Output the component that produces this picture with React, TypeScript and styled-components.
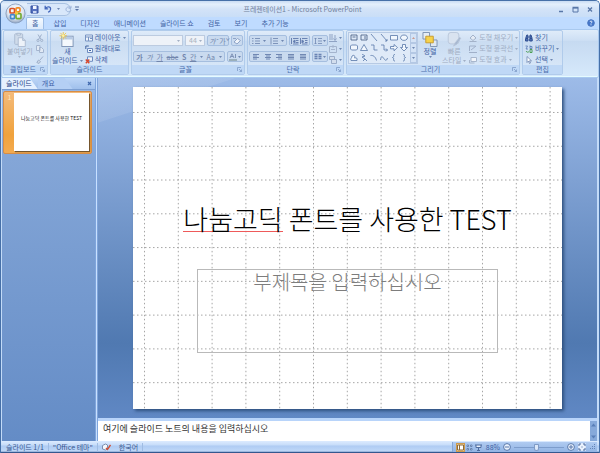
import React from 'react';
import styled, { createGlobalStyle, css } from 'styled-components';

const GlobalStyle = createGlobalStyle`
  *, *::before, *::after { box-sizing: border-box; }
  html, body { margin: 0; padding: 0; }
  body, button, input, select, textarea {
    font-family: "Noto Sans CJK KR", "Noto Sans", sans-serif;
    font-size: 7px;
    line-height: 9px;
    color: #3f62a4;
  }
  button { border: 0; margin: 0; padding: 0; background: none; white-space: nowrap; }
  svg { display: block; flex: none; }
`;

const Window = styled.div`
  height: 100vh;
  display: flex;
  flex-direction: column;
  overflow: hidden;
  background: #c3dbf8;
  border: solid #4670a8;
  border-width: 1px 1px 0 1px;
  border-radius: 5px 5px 0 0;
`;

/* Title bar and tabs */
const Header = styled.header`
  position: relative;
  flex: none;
`;
const TitleBar = styled.div`
  display: flex;
  align-items: center;
  height: 16px;
  padding: 0 6px 0 26px;
  background: linear-gradient(#c9dcf3, #e4effc 20%, #d3e3f8 50%, #c9def7);
`;
const QuickAccess = styled.div`
  display: flex;
  align-items: center;
  gap: 5px;
  width: 44px;
  height: 13px;
  padding-left: 3px;
  border: 1px solid #a9c2e2;
  border-left: 0;
  border-radius: 0 7px 7px 0;
  background: #d8e7fa;
`;
const MoreButton = styled.button`
  padding-left: 4px;
`;
const WindowTitle = styled.h1`
  flex: 1;
  margin: 0;
  padding-right: 32px;
  text-align: center;
  font-size: 7px;
  font-weight: 400;
  line-height: 12px;
  color: #71819b;
`;
const WindowButtons = styled.div`
  display: flex;
  align-items: center;
  gap: 8px;
`;
const OfficeButton = styled.button`
  position: absolute;
  top: 2px;
  left: 4px;
`;
const TabBar = styled.nav`
  display: flex;
  align-items: flex-end;
  height: 12px;
  padding: 0 4px 0 25px;
  background: #bfdbff;
`;
const RibbonTab = styled.button<{ $active?: boolean }>`
  height: 12px;
  padding: 0 5px;
  margin-right: 4px;
  border-radius: 2px 2px 0 0;
  ${p => p.$active && css`
    border: 1px solid #9dbde6;
    border-bottom: 0;
    background: linear-gradient(#f5faff, #dceafb);
  `}
`;
const HelpButton = styled.button`
  margin-left: auto;
  align-self: center;
`;

/* Ribbon */
const Ribbon = styled.div`
  flex: none;
  display: flex;
  gap: 2px;
  height: 49px;
  padding: 0 2px 2px 1px;
  border: 1px solid #a9c9ef;
  border-radius: 2px;
  background: linear-gradient(#dfecfa, #cddff4 22%, #c6daf1 24%, #d6e9fb);
  box-shadow: inset 0 -1px #e5fbff;
`;
const Group = styled.section<{ $w: number }>`
  flex: none;
  display: flex;
  flex-direction: column;
  width: ${p => p.$w}px;
  border: 1px solid #b0cbeb;
  border-radius: 2px;
  background: linear-gradient(#dfebf9, #d1e1f4 22%, #cadcf1 24%, #dae9fa);
`;
const GroupBody = styled.div<{ $gap?: number; $pad?: number }>`
  flex: 1;
  min-height: 0;
  display: flex;
  gap: ${p => p.$gap ?? 4}px;
  padding: 0 ${p => p.$pad ?? 3}px;
`;
const GroupLabel = styled.h2`
  display: flex;
  align-items: center;
  justify-content: center;
  height: 9px;
  margin: 0;
  padding: 0 2px;
  font-size: 7px;
  font-weight: 400;
  line-height: 9px;
  background: #bfd8f6;
  color: #4a6cab;
  & > span { flex: 1; text-align: center; }
`;
const BigButton = styled.button<{ $disabled?: boolean }>`
  display: flex;
  flex-direction: column;
  align-items: center;
  padding-top: 1px;
  color: ${p => (p.$disabled ? '#9eabc0' : '#3f62a4')};
  & > svg:first-child { height: 15px; }
`;
const CaretLine = styled.span`
  display: flex;
  align-items: center;
  gap: 2px;
`;
const SmallStack = styled.div`
  display: flex;
  flex-direction: column;
  justify-content: space-around;
  padding: 1px 0 0;
`;
const SmallButton = styled.button<{ $disabled?: boolean }>`
  display: flex;
  align-items: center;
  gap: 2px;
  color: ${p => (p.$disabled ? '#a0aec5' : '#4566a6')};
`;
const Rows = styled.div`
  flex: 1;
  min-width: 0;
  display: flex;
  flex-direction: column;
  gap: 5px;
  padding-top: 4px;
`;
const Row = styled.div`
  display: flex;
  gap: 2px;
`;
const FontSelect = styled.select<{ $w: number }>`
  appearance: none;
  width: ${p => p.$w}px;
  height: 11px;
  padding: 0 3px;
  border: 1px solid #bccbe0;
  border-radius: 0;
  background: #eef2f8;
  color: #a9b2c0;
`;
const SelectBox = styled.span`
  display: flex;
  align-items: center;
  & > svg { margin-left: -6px; margin-right: 3px; pointer-events: none; }
`;
const ToolGroup = styled.div<{ $grow?: boolean }>`
  display: flex;
  align-items: center;
  justify-content: space-around;
  flex: ${p => (p.$grow ? 1 : 'none')};
  min-width: 0;
  height: 11px;
  padding: 0 1px;
  gap: 1px;
  border: 1px solid #a5bedf;
  border-radius: 2px;
  background: #c9daef;
`;
const LetterButton = styled.button<{ $kind?: 'bold' | 'italic' | 'under' | 'strike' }>`
  color: #7186ad;
  line-height: 8px;
  font-weight: ${p => (p.$kind === 'bold' ? 700 : 400)};
  font-style: ${p => (p.$kind === 'italic' ? 'italic' : 'normal')};
  text-decoration: ${p =>
    p.$kind === 'under' ? 'underline' : p.$kind === 'strike' ? 'line-through' : 'none'};
`;

/* Workspace */
const Workspace = styled.div`
  flex: 1;
  min-height: 0;
  display: flex;
  padding: 0 2px 0 1px;
`;
const Sidebar = styled.aside`
  flex: none;
  width: 93px;
  display: flex;
  flex-direction: column;
  background: linear-gradient(#9bbbe9, #84a6d7 22%, #648cc6);
`;
const PaneTabs = styled.div`
  flex: none;
  display: flex;
  align-items: center;
  height: 12px;
  background: linear-gradient(#bdd6f7, #a0c0ec);
  border-bottom: 1px solid #7c9fd2;
`;
const PaneTab = styled.button<{ $active?: boolean }>`
  height: 11px;
  padding: 0 ${p => (p.$active ? 6 : 18)}px 0 4px;
  color: ${p => (p.$active ? '#1d3f85' : '#3d62a8')};
  background: ${p => (p.$active ? '#e6f1ff' : '#b4cff4')};
  clip-path: polygon(0 0, calc(100% - 8px) 0, 100% 100%, 0 100%);
`;
const ClosePane = styled.button`
  margin-left: auto;
  padding-right: 3px;
`;
const Thumbnail = styled.button`
  display: flex;
  gap: 1px;
  margin: 1px 3px 0 1px;
  padding: 1px 2px 2px 2px;
  border: 1px solid #d78d46;
  border-radius: 2px;
  background: linear-gradient(#f4bb7b, #f0a23c 70%, #f3ab50);
`;
const ThumbNumber = styled.span`
  width: 7px;
  text-align: center;
  color: #fbe7c4;
`;
const ThumbPage = styled.span`
  flex: 1;
  height: 58px;
  padding-top: 20px;
  font-size: 5px;
  line-height: 9px;
  text-align: center;
  color: #111;
  background: #fff;
  box-shadow: 1px 1px 1px #75552c;
`;
const Splitter = styled.div`
  flex: none;
  width: 3px;
  border: solid #7fa5dc;
  border-width: 0 1px;
  background: #c8e0ff;
`;
const Editor = styled.main`
  flex: 1;
  min-width: 0;
  display: flex;
  flex-direction: column;
`;
const Canvas = styled.div`
  flex: 1;
  min-height: 0;
  display: flex;
  align-items: center;
  justify-content: center;
  padding: 0 35px;
  background:
    linear-gradient(162deg, #ffffff26 0, #ffffff18 42px, transparent 43px),
    linear-gradient(#9dbbe8, #7fa1d3 30%, #5079b1 78%, #6088c4);
`;
const Slide = styled.article`
  position: relative;
  flex: 1;
  aspect-ratio: 4 / 3;
  display: grid;
  grid-template-rows: 182fr 84fr 56fr;
  justify-items: center;
  background: #fff;
  box-shadow: 2px 2px 3px #2f517f;
`;
const GridLines = styled.svg`
  position: absolute;
  inset: 0;
  width: 100%;
  height: 100%;
`;
const SlideTitle = styled.h2`
  position: relative;
  align-self: end;
  margin: 0 0 30px;
  font-size: 27px;
  font-weight: 300;
  line-height: 40px;
  white-space: nowrap;
  color: #000;
`;
const Misspelled = styled.span`
  background: linear-gradient(#ee5a5a, #ee5a5a) 0 32px / 100% 1px no-repeat;
`;
const Subtitle = styled.p`
  position: relative;
  width: 70%;
  margin: 0;
  border: 1px solid #b9b9b9;
  font-size: 20px;
  font-weight: 300;
  line-height: 23px;
  text-align: center;
  color: #7d7d7d;
`;
const NotesPane = styled.div`
  flex: none;
  display: flex;
  height: 23px;
  border-top: 3px solid #b8d4fa;
`;
const Notes = styled.textarea`
  flex: 1;
  min-width: 0;
  resize: none;
  border: 0;
  outline: 0;
  padding: 2px 5px;
  overflow: hidden;
  font-size: 9px;
  line-height: 12px;
  color: #333;
  background: #fff;
`;
const NotesScroll = styled.div`
  display: flex;
  flex-direction: column;
  justify-content: space-between;
  width: 7px;
  padding: 2px 1px;
  background: #86a9da;
`;

/* Status bar */
const StatusBar = styled.footer`
  flex: none;
  display: flex;
  align-items: center;
  height: 12px;
  padding: 0 2px 0 1px;
  background: linear-gradient(#dcebff, #c6dcf9 35%, #aecbf3 40%, #bfd8f8 85%, #34588f 95%);
  color: #38578f;
`;
const StatusItem = styled.span`
  display: flex;
  align-items: center;
  gap: 8px;
  height: 9px;
  padding: 0 4px;
  border-right: 1px solid #9fbce3;
`;
const StatusTools = styled.div`
  display: flex;
  align-items: center;
  gap: 3px;
  height: 10px;
  margin-left: auto;
  padding-left: 3px;
  border-left: 1px solid #85a6d6;
  background: linear-gradient(#b0cbf1, #92b4e4);
`;
const ViewButton = styled.button<{ $active?: boolean }>`
  padding: 1px;
  background: ${p => (p.$active ? '#fbd99b' : 'transparent')};
  box-shadow: ${p => (p.$active ? 'inset 0 0 0 1px #cf9b4d' : 'none')};
`;
const ViewButtons = styled.div`
  display: flex;
`;
const ZoomSlider = styled.input`
  appearance: none;
  width: 50px;
  height: 8px;
  margin: 0;
  background: linear-gradient(#7d9dcc, #7d9dcc) center / 100% 1px no-repeat;
  &::-webkit-slider-thumb {
    appearance: none;
    width: 5px;
    height: 7px;
    border: 1px solid #7f9bc6;
    border-radius: 1px 1px 3px 3px;
    background: #dbe8fa;
  }
`;

type IconProps = { w?: number; h?: number; children: React.ReactNode; stroke?: string; fill?: string };
const Icon = ({ w = 8, h = 8, children, stroke = '#7f97bd', fill = 'none' }: IconProps) => (
  <svg width={w} height={h} viewBox={`0 0 ${w} ${h}`} stroke={stroke} fill={fill} aria-hidden="true">
    {children}
  </svg>
);
const Caret = ({ color = '#7088b2' }: { color?: string }) => (
  <Icon w={3} h={2} stroke="none" fill={color}><path d="M0 0h3L1.500 2z" /></Icon>
);
const Launcher = () => (
  <Icon w={5} h={5} stroke="#7f9cc8"><path d="M.5 4V.5H4M2 2l2.500 2.500M4.500 2.500v2h-2" strokeWidth=".8" /></Icon>
);

const OfficeLogo = () => (
  <svg width="21" height="21" viewBox="0 0 21 21" aria-hidden="true">
    <defs>
      <radialGradient id="orb" cx="50%" cy="35%" r="65%">
        <stop offset="0" stopColor="#ffffff" />
        <stop offset=".65" stopColor="#dde5f0" />
        <stop offset="1" stopColor="#8fa3c0" />
      </radialGradient>
    </defs>
    <circle cx="10.500" cy="10.500" r="9.600" fill="url(#orb)" stroke="#8297b7" strokeWidth=".8" />
    <g fill="none" strokeWidth="1.700">
      <rect x="5" y="5.500" width="4.500" height="4.500" rx="1" stroke="#dc5327" />
      <rect x="11" y="4.800" width="4" height="4" rx="1" stroke="#f08a24" />
      <rect x="5.500" y="11.600" width="4" height="4" rx="1" stroke="#4386cf" />
      <rect x="11" y="10.600" width="5" height="5" rx="1" stroke="#74ac35" />
    </g>
    <path d="M10 8.500h3v3h-3z" fill="#f6c53b" />
  </svg>
);

const SaveIcon = () => (
  <Icon w={9} h={9} stroke="#3550a0" fill="#5570be">
    <path d="M1 1h7v7H1z" /><path d="M3 1h3.500v3H3z" fill="#f3f7ff" stroke="none" /><path d="M3 6h3.500v2H3z" fill="#cbd7f3" stroke="none" />
  </Icon>
);
const UndoIcon = () => (
  <Icon w={8} h={8} stroke="#4468bb"><path d="M1.500 3.500C3.500 1 7 1.500 6.500 4.500 6.300 6 5 7 4 7.200M1.200.8v3h3" strokeWidth="1.300" /></Icon>
);
const RedoIcon = () => (
  <Icon w={7} h={8} stroke="#9cb3d8"><path d="M5.500 2.500C2.500 1 .8 3 1 4.800 1.500 7 4.500 7.500 6 5.500M6 .8v2.400H3.500" /></Icon>
);
const PasteIcon = () => (
  <Icon w={14} h={17} stroke="#a9b8cf" fill="#cfdbea">
    <rect x="1" y="2" width="9" height="12" rx="1" /><path d="M3.500 3.500v-2h4v2z" fill="#e3eaf4" />
    <path d="M5 6.500h5l3 3v7H5z" fill="#edf2f9" /><path d="M10 6.500v3h3" />
  </Icon>
);
const CutIcon = () => (
  <Icon stroke="#9fb0ca"><path d="M2 .5l3 5M5.500.5l-3 5" /><circle cx="2" cy="6.400" r="1.100" /><circle cx="5.700" cy="6.400" r="1.100" /></Icon>
);
const CopyIcon = () => (
  <Icon stroke="#a4b5cf" fill="#e0e9f4"><path d="M.5.5H4v5H.5zM3.500 2.500h2l2 2v3h-4z" /></Icon>
);
const BrushIcon = () => (
  <Icon stroke="#9fb0ca"><path d="M7 .5L4 4M2.500 4l2 1.500L3 7.500.8 6.500z" fill="#cbd7e7" /></Icon>
);
const NewSlideIcon = () => (
  <Icon w={18} h={16} stroke="#7d93b5">
    <rect x="3.500" y="4.500" width="12" height="11" fill="#f4f8fd" />
    <path d="M4 5h11v3H4z" fill="#b8cbe6" stroke="none" />
    <path d="M5 0v8M1 4h8M2 1l6 6M8 1L2 7" stroke="#f0c43c" strokeWidth=".9" />
    <circle cx="5" cy="4" r="1.400" fill="#fff2a0" stroke="none" />
  </Icon>
);
const LayoutIcon = () => (
  <Icon stroke="#7793c2" fill="#eef4fc"><path d="M.5 1h7v6h-7z" /><path d="M1 3h6M3.500 3v4M5 4.500h2" /></Icon>
);
const ResetIcon = () => (
  <Icon stroke="#6d8bc0" fill="#edf3fc"><path d="M2.500 3.500h5v4h-5z" /><path d="M.8 4V1h3M4 5.500h2" fill="none" stroke="#41639f" /></Icon>
);
const DeleteIcon = () => (
  <Icon stroke="#6d8bc0" fill="#edf3fc"><path d="M2.500.8h5v4.500h-5z" /><path d="M.8 3.500l3.500 3.800M4.300 3.500L.8 7.300" stroke="#d8472c" strokeWidth="1.400" /></Icon>
);
const ListIcon = ({ numbered }: { numbered?: boolean }) => (
  <Icon stroke="#7e94ba">
    <path d="M3 1.500h5M3 4h5M3 6.500h5" />
    <path d={numbered ? 'M1 .5v7' : 'M0 1.500h1.500M0 4h1.500M0 6.500h1.500'} />
  </Icon>
);
const AlignIcon = ({ kind }: { kind: 'left' | 'center' | 'right' | 'full' }) => (
  <Icon stroke="#7188b3">
    <path d="M1 1.500h6M1 4.500h6" strokeWidth="1.200" />
    <path d={{ left: 'M1 3h4M1 6h4', center: 'M2 3h4M2 6h4', right: 'M3 3h4M3 6h4', full: 'M1 3h6M1 6h6' }[kind]} strokeWidth="1.200" />
  </Icon>
);
const IndentIcon = ({ out }: { out?: boolean }) => (
  <Icon stroke="#6a83b3">
    <path d="M.5 1v6M2 1.500h5.500M5 3.500h2.500M5 5.500h2.500M2 7h5.500" /><path d={out ? 'M4 3L2 4.500 4 6z' : 'M2 3l2 1.500L2 6z'} fill="#5874ab" />
  </Icon>
);
const SpacingIcon = () => (
  <Icon stroke="#7188b3"><path d="M1.500 1v6M.5 2l1-1 1 1M.5 6l1 1 1-1M4 1.500h4M4 4h4M4 6.500h4" strokeWidth=".8" /></Icon>
);
const ColumnsIcon = () => (
  <Icon stroke="#6a83b3"><path d="M.5 1.500h3M.5 3.500h3M.5 5.500h3M4.500 1.500h3M4.500 3.500h3M4.500 5.500h3" strokeWidth="1.400" /></Icon>
);
const DirectionIcon = () => (
  <Icon stroke="#8fa3c4"><path d="M1 0v6M3 0v6M6 1v5M4.500 4.500L6 6.500l1.500-2M0 7.500h8" /></Icon>
);
const TextAlignIcon = () => (
  <Icon stroke="#a4b4cd"><path d="M.5 1.500h7v6h-7zM4 0v3M2 4.500h4" /></Icon>
);
const SmartArtIcon = () => (
  <Icon stroke="#9badc9" fill="#d3deed"><path d="M.5.5h5v3h-5zM2.500 3.500h5v4h-5z" /></Icon>
);
const EraserIcon = () => (
  <Icon stroke="#8fa4c7" fill="#eef3fa"><path d="M1 5l3.500-3.500 3 2L4 7z" /><path d="M0 1.500h3" /></Icon>
);
const ColorIcon = () => (
  <Icon stroke="#7f93b7"><path d="M1 5L3 .8 5 5M1.800 3.500h2.500M6.500 1v4" /><path d="M0 7h8" stroke="#8aa0a8" strokeWidth="1.500" /></Icon>
);
const ArrangeIcon = () => (
  <Icon w={18} h={16} stroke="#7b90b0">
    <path d="M1.500.5h7v7h-7z" fill="#e6edf6" /><path d="M9.500 8.500h7v7h-7z" fill="#dfe8f4" />
    <path d="M4.500 4.500h8v7h-8z" fill="#f6d24b" stroke="#c79b2c" />
  </Icon>
);
const QuickStyleIcon = () => (
  <Icon w={16} h={17} stroke="#b7c5d9" fill="#d9e3f0">
    <rect x="1.500" y=".5" width="12" height="13" rx="3" /><path d="M14.500 6l-5 6-2 4 4-2.500 4-6.500z" fill="#a5b6cf" />
  </Icon>
);
const FillIcon = () => (
  <Icon stroke="#a3b2c9"><path d="M1 4l3-3 3 3-3 2.500zM.5 7.500h7" fill="#e4ebf5" /></Icon>
);
const OutlineIcon = () => (
  <Icon stroke="#a0b0c9"><path d="M.5 1h6M.5 1v5M2 5l5-4M0 7.500h8" /></Icon>
);
const EffectIcon = () => (
  <Icon stroke="#a8b7cd" fill="#f0f4fa"><path d="M2 1.500h5.500v4H2z" /><path d="M.5 4v3h5" fill="none" /></Icon>
);
const FindIcon = () => (
  <Icon stroke="#304f91" fill="#4f70b4"><path d="M.8 4l1-3h1v3M5 4V1h1l1 3M.5 4.500h2.500v2.500H.5zM4.700 4.500h2.500v2.500H4.700zM3 3h2" /></Icon>
);
const ReplaceIcon = () => (
  <Icon stroke="#5677b4"><path d="M.5 1h2L1 4h2M5 .5v3h2v-2H5" strokeWidth=".8" /><path d="M1 6c1 1.500 2 1.500 3 .5M5 4.500h2v3H5z" stroke="#4d9e55" /></Icon>
);
const SelectIcon = () => (
  <Icon stroke="#6079a6" fill="#fff"><path d="M2 .5v6l1.500-1.500 1 2.500 1-.5-1-2.200h2z" strokeWidth=".7" /></Icon>
);

const shapePaths = [
  'M1 1h6v5H1zM2.500 3h3', 'M1 1h6v5H1zM5 2v3', 'M1 0l6 7', 'M1 0l6 7M5 7h2V5', 'M.5 1.500h7v4.500h-7z', 'M4 1a3.500 2.700 0 1 0 .01 0z',
  'M1.500 1h5l1 1v3l-1 1h-5l-1-1V2z', 'M4 .5L7.500 6.500h-7z', 'M1 1h3v5h3.500', 'M1 1h3v5h3.500M6 4.500L7.500 6 6 7.500', 'M.5 2.500H4v-2l3.500 3L4 6.800v-2H.5z', 'M2.500.5v3h-2L4 7l3.500-3.500h-2v-3z',
  'M1 6.500c-1-2 1-2.500 1-4.500 3-2 3 1 2.500 2 2-.5 3 0 2.500 2.500z', 'M2 0l3 2-3 1 3 2-2 2M5 5l2 2', 'M.5 1.500c3-.5 5 1.500 6 5', 'M.5 6C2-4 5 12 7.500 4', 'M5 .5C2 .5 5 3 2.500 3.500 5 4 2 7 5 7', 'M3 .5c3 0 0 2.500 2.500 3C3 4 6 7 3 7',
];
const ShapeGallery = styled.div`
  display: grid;
  grid-template-columns: repeat(6, 8px);
  gap: 2px;
  align-content: center;
  padding-left: 1px;
`;
const GalleryFrame = styled.div`
  display: flex;
  gap: 2px;
  height: 32px;
  margin-top: 1px;
  border: 1px solid #b7cae4;
  background: #dfeaf8;
`;
const GalleryScroll = styled.div`
  display: flex;
  flex-direction: column;
  width: 7px;
  & > button {
    flex: 1;
    display: grid;
    place-items: center;
    border: 1px solid #b4c8e4;
    background: #d4e3f6;
  }
`;

const tabs = ['홈', '삽입', '디자인', '애니메이션', '슬라이드 쇼', '검토', '보기', '추가 기능'];
const gridX = Array.from({ length: 13 }, (_, i) => 11.5 + i * 33.8);
const gridY = Array.from({ length: 9 }, (_, i) => 25.5 + i * 33.8);

const Label = ({ text, launcher }: { text: string; launcher?: boolean }) => (
  <GroupLabel><span>{text}</span>{launcher && <Launcher />}</GroupLabel>
);
const Tool = ({ name, children }: { name: string; children: React.ReactNode }) => (
  <button aria-label={name}>{children}</button>
);

export default function App() {
  return (
    <>
      <GlobalStyle />
      <Window>
        <Header>
          <TitleBar>
            <QuickAccess>
              <Tool name="저장"><SaveIcon /></Tool>
              <Tool name="실행 취소"><UndoIcon /></Tool>
              <Caret />
              <Tool name="다시 실행"><RedoIcon /></Tool>
            </QuickAccess>
            <MoreButton aria-label="빠른 실행 도구 모음 사용자 지정">
              <Icon w={4} h={6} stroke="#5872a2"><path d="M0 1h4" /><path d="M0 3h4L2 5z" fill="#5872a2" stroke="none" /></Icon>
            </MoreButton>
            <WindowTitle>프레젠테이션1 - Microsoft PowerPoint</WindowTitle>
            <WindowButtons>
              <Tool name="최소화"><Icon w={6} h={7} stroke="#5877a8"><path d="M1 5.500h4" strokeWidth="1.300" /></Icon></Tool>
              <Tool name="최대화"><Icon w={7} h={7} stroke="#5877a8"><path d="M1 2h5v4H1z" /><path d="M.5 1.500h6" strokeWidth="1.300" /></Icon></Tool>
              <Tool name="닫기"><Icon w={6} h={7} stroke="#5877a8"><path d="M1 1.500l4 4M5 1.500l-4 4" strokeWidth="1.300" /></Icon></Tool>
            </WindowButtons>
          </TitleBar>
          <TabBar>
            {tabs.map((t, i) => <RibbonTab key={t} $active={i === 0}>{t}</RibbonTab>)}
            <HelpButton aria-label="도움말">
              <Icon stroke="#4a74bf" fill="#4477cb"><circle cx="4" cy="4" r="3.300" /><path d="M3 3c.3-1.500 2.500-1 1.800.3L4 4.500M4 5.300v1" stroke="#fff" fill="none" strokeWidth=".9" /></Icon>
            </HelpButton>
          </TabBar>
          <OfficeButton aria-label="Office 단추"><OfficeLogo /></OfficeButton>
        </Header>

        <Ribbon>
          <Group $w={45}>
            <GroupBody $gap={3} $pad={3}>
              <BigButton $disabled><PasteIcon />붙여넣기<Caret color="#a9b7cc" /></BigButton>
              <SmallStack>
                <Tool name="잘라내기"><CutIcon /></Tool>
                <Tool name="복사"><CopyIcon /></Tool>
                <Tool name="서식 복사"><BrushIcon /></Tool>
              </SmallStack>
            </GroupBody>
            <Label text="클립보드" launcher />
          </Group>

          <Group $w={79}>
            <GroupBody $gap={2} $pad={1}>
              <BigButton><NewSlideIcon />새<CaretLine>슬라이드<Caret /></CaretLine></BigButton>
              <SmallStack>
                <SmallButton><LayoutIcon />레이아웃<Caret /></SmallButton>
                <SmallButton><ResetIcon />원래대로</SmallButton>
                <SmallButton><DeleteIcon />삭제</SmallButton>
              </SmallStack>
            </GroupBody>
            <Label text="슬라이드" />
          </Group>

          <Group $w={114}>
            <GroupBody $pad={1}>
              <Rows>
                <Row>
                  <SelectBox><FontSelect $w={50} aria-label="글꼴"><option></option></FontSelect><Caret color="#a3b0c4" /></SelectBox>
                  <SelectBox><FontSelect $w={20} aria-label="글꼴 크기"><option>44</option></FontSelect><Caret color="#a3b0c4" /></SelectBox>
                  <ToolGroup $grow><LetterButton $kind="italic">가ˆ</LetterButton><LetterButton>가ˇ</LetterButton></ToolGroup>
                  <ToolGroup><Tool name="서식 지우기"><EraserIcon /></Tool></ToolGroup>
                </Row>
                <Row>
                  <ToolGroup $grow>
                    <LetterButton $kind="bold">가</LetterButton>
                    <LetterButton $kind="italic">가</LetterButton>
                    <LetterButton $kind="under">가</LetterButton>
                    <LetterButton $kind="strike">abc</LetterButton>
                    <LetterButton $kind="bold">S</LetterButton>
                    <LetterButton $kind="under">간</LetterButton>
                    <Caret />
                    <LetterButton>Aa</LetterButton>
                    <Caret />
                  </ToolGroup>
                  <ToolGroup><Tool name="글꼴 색"><ColorIcon /></Tool><Caret /></ToolGroup>
                </Row>
              </Rows>
            </GroupBody>
            <Label text="글꼴" launcher />
          </Group>

          <Group $w={97}>
            <GroupBody $gap={1} $pad={1}>
              <Rows>
                <Row>
                  <ToolGroup $grow>
                    <Tool name="글머리 기호"><ListIcon /></Tool><Caret />
                    <Tool name="번호 매기기"><ListIcon numbered /></Tool><Caret />
                  </ToolGroup>
                  <ToolGroup>
                    <Tool name="목록 수준 줄임"><IndentIcon out /></Tool>
                    <Tool name="목록 수준 늘림"><IndentIcon /></Tool>
                  </ToolGroup>
                  <ToolGroup><Tool name="줄 간격"><SpacingIcon /></Tool><Caret /></ToolGroup>
                </Row>
                <Row>
                  <ToolGroup $grow>
                    <Tool name="왼쪽 맞춤"><AlignIcon kind="left" /></Tool>
                    <Tool name="가운데 맞춤"><AlignIcon kind="center" /></Tool>
                    <Tool name="오른쪽 맞춤"><AlignIcon kind="right" /></Tool>
                    <Tool name="양쪽 맞춤"><AlignIcon kind="full" /></Tool>
                    <Tool name="균등 분할"><AlignIcon kind="full" /></Tool>
                  </ToolGroup>
                  <ToolGroup><Tool name="단"><ColumnsIcon /></Tool><Caret /></ToolGroup>
                </Row>
              </Rows>
              <SmallStack>
                <SmallButton aria-label="텍스트 방향"><DirectionIcon /><Caret /></SmallButton>
                <SmallButton aria-label="텍스트 맞춤"><TextAlignIcon /><Caret /></SmallButton>
                <SmallButton aria-label="SmartArt로 변환"><SmartArtIcon /><Caret /></SmallButton>
              </SmallStack>
            </GroupBody>
            <Label text="단락" launcher />
          </Group>

          <Group $w={174}>
            <GroupBody $gap={3} $pad={1}>
              <GalleryFrame>
                <ShapeGallery>
                  {shapePaths.map((d, i) => (
                    <Icon key={i} stroke={i < 2 ? '#40587f' : '#5777a8'} fill={[4, 5, 6, 7, 10, 11, 12].includes(i) ? '#f2f7fd' : 'none'}>
                      <path d={d} strokeWidth=".8" />
                    </Icon>
                  ))}
                </ShapeGallery>
                <GalleryScroll>
                  <button aria-label="위로"><Icon w={3} h={2} stroke="none" fill="#c9998f"><path d="M0 2h3L1.500 0z" /></Icon></button>
                  <button aria-label="아래로"><Caret /></button>
                  <button aria-label="자세히"><Caret /></button>
                </GalleryScroll>
              </GalleryFrame>
              <BigButton><ArrangeIcon />정렬<Caret /></BigButton>
              <BigButton $disabled><QuickStyleIcon />빠른<CaretLine>스타일<Caret color="#a0aec5" /></CaretLine></BigButton>
              <SmallStack>
                <SmallButton $disabled><FillIcon />도형 채우기<Caret color="#a0aec5" /></SmallButton>
                <SmallButton $disabled><OutlineIcon />도형 윤곽선<Caret color="#a0aec5" /></SmallButton>
                <SmallButton $disabled><EffectIcon />도형 효과<Caret color="#a0aec5" /></SmallButton>
              </SmallStack>
            </GroupBody>
            <Label text="그리기" launcher />
          </Group>

          <Group $w={41}>
            <GroupBody $pad={2}>
              <SmallStack>
                <SmallButton><FindIcon />찾기</SmallButton>
                <SmallButton><ReplaceIcon />바꾸기<Caret /></SmallButton>
                <SmallButton><SelectIcon />선택<Caret /></SmallButton>
              </SmallStack>
            </GroupBody>
            <Label text="편집" />
          </Group>
        </Ribbon>

        <Workspace>
          <Sidebar>
            <PaneTabs>
              <PaneTab $active>슬라이드</PaneTab>
              <PaneTab>개요</PaneTab>
              <ClosePane aria-label="창 닫기">
                <Icon w={5} h={5} stroke="#3f68ad"><path d="M1 1l3 3M4 1L1 4" strokeWidth="1.200" /></Icon>
              </ClosePane>
            </PaneTabs>
            <Thumbnail>
              <ThumbNumber>1</ThumbNumber>
              <ThumbPage>나눔고딕 폰트를 사용한 TEST</ThumbPage>
            </Thumbnail>
          </Sidebar>
          <Splitter />
          <Editor>
            <Canvas>
              <Slide>
                <GridLines viewBox="0 0 429 322" preserveAspectRatio="none" stroke="#a6a6a6" strokeWidth="1" strokeDasharray="1.500 2.500" aria-hidden="true">
                  {gridX.map(x => <path key={x} d={`M${x} 0V322`} />)}
                  {gridY.map(y => <path key={y} d={`M0 ${y}H429`} />)}
                </GridLines>
                <SlideTitle><Misspelled>나눔고딕</Misspelled> 폰트를 사용한 TEST</SlideTitle>
                <Subtitle>부제목을 입력하십시오</Subtitle>
              </Slide>
            </Canvas>
            <NotesPane>
              <Notes aria-label="슬라이드 노트" defaultValue="여기에 슬라이드 노트의 내용을 입력하십시오" />
              <NotesScroll>
                <Icon w={5} h={4} stroke="none" fill="#597fb8"><path d="M0 3.500h5L2.500.5z" /></Icon>
                <Icon w={5} h={4} stroke="none" fill="#597fb8"><path d="M0 .5h5L2.500 3.500z" /></Icon>
              </NotesScroll>
            </NotesPane>
          </Editor>
        </Workspace>

        <StatusBar>
          <StatusItem>슬라이드 1/1</StatusItem>
          <StatusItem>"Office 테마"</StatusItem>
          <StatusItem>
            <Icon w={9} h={8} stroke="#7c8fb0" fill="#f4f7fc"><path d="M.5 2.500l3-1.500 2 1v4l-2 1-3-1z" /><path d="M4 5l1.500 1.500L8.500 2" stroke="#d34f35" fill="none" strokeWidth="1.400" /></Icon>
            한국어
          </StatusItem>
          <StatusTools>
            <ViewButtons>
              <ViewButton $active aria-label="기본"><Icon w={7} h={7} stroke="#8a6a3b" fill="#fff"><path d="M.5 1h6v5h-6zM2.500 1v5" /></Icon></ViewButton>
              <ViewButton aria-label="여러 슬라이드"><Icon w={7} h={7} stroke="#5573a5" fill="#e9f1fc"><path d="M1 1h1.500v1.500H1zM4.500 1H6v1.500H4.500zM1 4.500h1.500V6H1zM4.500 4.500H6V6H4.500z" strokeWidth=".8" /></Icon></ViewButton>
              <ViewButton aria-label="슬라이드 쇼"><Icon w={7} h={7} stroke="#4f6c9f" fill="#e9f1fc"><path d="M0 1h7M1 1v2.500h5V1M3.500 3.500V6M2 6.500h3" /></Icon></ViewButton>
            </ViewButtons>
            <button>88%</button>
            <Tool name="축소"><Icon stroke="#5877aa" fill="#eaf2fd"><circle cx="4" cy="4" r="3.400" /><path d="M2 4h4" /></Icon></Tool>
            <ZoomSlider type="range" min={0} max={100} defaultValue={45} aria-label="확대/축소" />
            <Tool name="확대"><Icon stroke="#5877aa" fill="#eaf2fd"><circle cx="4" cy="4" r="3.400" /><path d="M2 4h4M4 2v4" /></Icon></Tool>
            <Tool name="현재 창 크기에 맞춤"><Icon stroke="#4c6b9e" fill="#eaf2fd"><path d="M.5.5h7v7h-7z" stroke="#d8e6fa" /><path d="M1 3V1h2M5 1h2v2M7 5v2H5M3 7H1V5M3.500 4h1" fill="none" /></Icon></Tool>
            <Icon w={8} h={8} stroke="none" fill="#6485b8"><path d="M5 1h1v1H5zM3 3h1v1H3zM5 3h1v1H5zM1 5h1v1H1zM3 5h1v1H3zM5 5h1v1H5z" /></Icon>
          </StatusTools>
        </StatusBar>
      </Window>
    </>
  );
}
